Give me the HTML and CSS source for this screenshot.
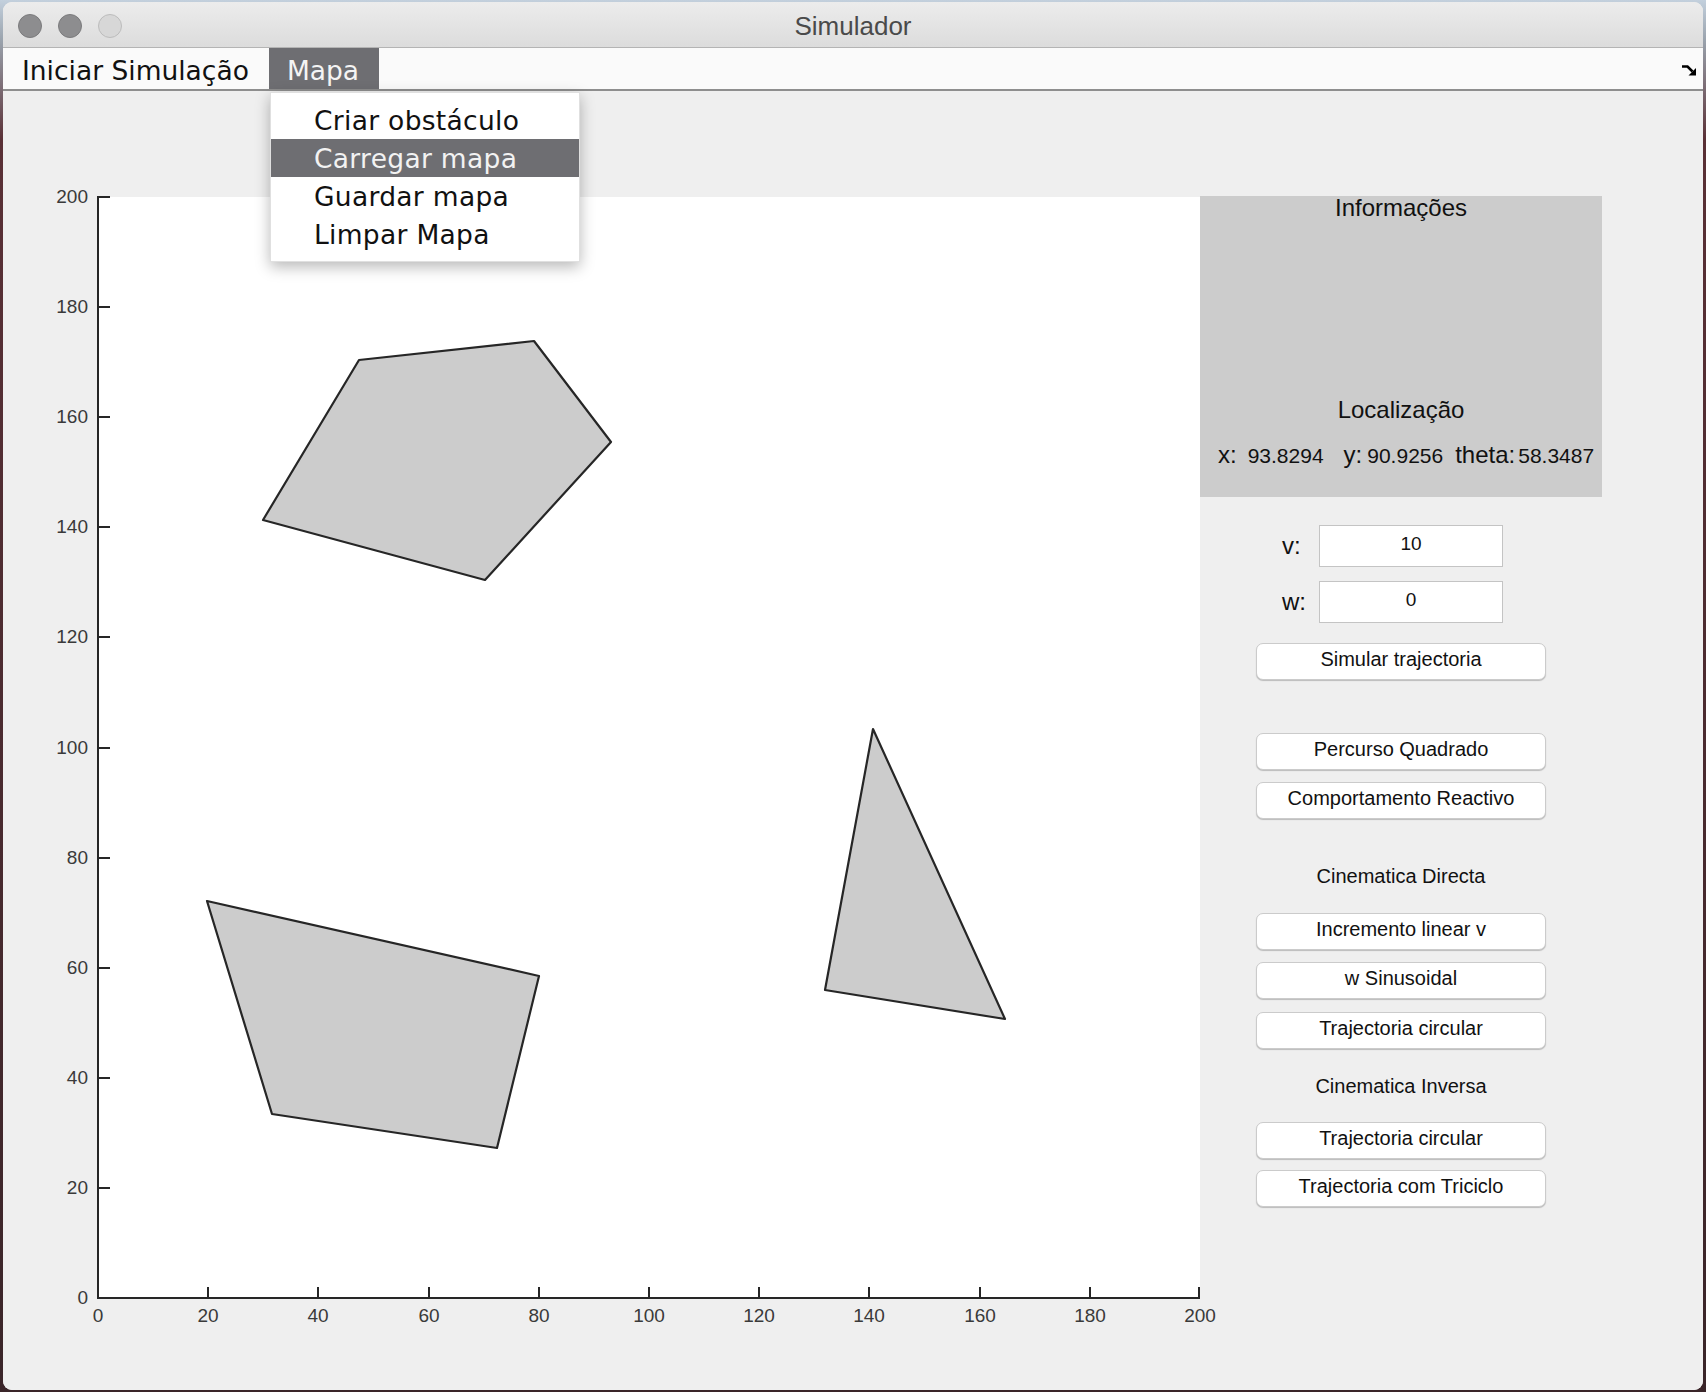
FILE: index.html
```html
<!DOCTYPE html>
<html lang="pt">
<head>
<meta charset="utf-8">
<title>Simulador</title>
<link rel="stylesheet" href="styles.css">
</head>
<body>
<div class="window">
  <header class="titlebar">
    <div class="lights">
      <span class="light dark"></span>
      <span class="light dark"></span>
      <span class="light off"></span>
    </div>
    <div class="title">Simulador</div>
    <div></div>
  </header>
  <nav class="menubar">
    <span class="menu-item">Iniciar Simulação</span>
    <span class="menu-item active">Mapa</span>
    <svg class="menu-arrow" width="16" height="13" viewBox="0 0 16 13">
      <path d="M1 3.5 H6.5 L11.5 8.5" fill="none" stroke="#000" stroke-width="2.6"/>
      <polygon points="7.5,12.5 15,12.5 15,5" fill="#000"/>
    </svg>
  </nav>
  <ul class="dropdown">
    <li class="dd-item">Criar obstáculo</li>
    <li class="dd-item selected">Carregar mapa</li>
    <li class="dd-item">Guardar mapa</li>
    <li class="dd-item">Limpar Mapa</li>
  </ul>
  <main class="content">
    <svg class="plot" width="1197" height="1299" viewBox="3 91 1197 1299">
      <rect x="98" y="197" width="1102" height="1101" fill="#ffffff"/>
      <g class="obstacles">
        <polygon points="359,360 534,341 611,442 485,580 263,520"/>
        <polygon points="873,729 1005,1019 825,990"/>
        <polygon points="207,901 539,976 497,1148 272,1114"/>
      </g>
      <g class="ticks">
        <line x1="98" y1="197" x2="110" y2="197"/>
        <line x1="98" y1="307" x2="110" y2="307"/>
        <line x1="98" y1="417" x2="110" y2="417"/>
        <line x1="98" y1="527" x2="110" y2="527"/>
        <line x1="98" y1="637" x2="110" y2="637"/>
        <line x1="98" y1="748" x2="110" y2="748"/>
        <line x1="98" y1="858" x2="110" y2="858"/>
        <line x1="98" y1="968" x2="110" y2="968"/>
        <line x1="98" y1="1078" x2="110" y2="1078"/>
        <line x1="98" y1="1188" x2="110" y2="1188"/>
        <line x1="208" y1="1298" x2="208" y2="1287"/>
        <line x1="318" y1="1298" x2="318" y2="1287"/>
        <line x1="429" y1="1298" x2="429" y2="1287"/>
        <line x1="539" y1="1298" x2="539" y2="1287"/>
        <line x1="649" y1="1298" x2="649" y2="1287"/>
        <line x1="759" y1="1298" x2="759" y2="1287"/>
        <line x1="869" y1="1298" x2="869" y2="1287"/>
        <line x1="980" y1="1298" x2="980" y2="1287"/>
        <line x1="1090" y1="1298" x2="1090" y2="1287"/>
        <line x1="1199" y1="1298" x2="1199" y2="1287"/>
        <path d="M98 196 V1298 H1200"/>
      </g>
      <g class="ylabels">
        <text x="88" y="203">200</text>
        <text x="88" y="313">180</text>
        <text x="88" y="423">160</text>
        <text x="88" y="533">140</text>
        <text x="88" y="643">120</text>
        <text x="88" y="754">100</text>
        <text x="88" y="864">80</text>
        <text x="88" y="974">60</text>
        <text x="88" y="1084">40</text>
        <text x="88" y="1194">20</text>
        <text x="88" y="1304">0</text>
      </g>
      <g class="xlabels">
        <text x="98" y="1322">0</text>
        <text x="208" y="1322">20</text>
        <text x="318" y="1322">40</text>
        <text x="429" y="1322">60</text>
        <text x="539" y="1322">80</text>
        <text x="649" y="1322">100</text>
        <text x="759" y="1322">120</text>
        <text x="869" y="1322">140</text>
        <text x="980" y="1322">160</text>
        <text x="1090" y="1322">180</text>
        <text x="1200" y="1322">200</text>
      </g>
    </svg>
    <aside class="side">
      <section class="info">
        <div class="info-title">Informações</div>
        <div class="info-title loc-title">Localização</div>
        <div class="coords">
          <span class="lbl">x:</span><span class="val v-x">93.8294</span>
          <span class="lbl l-y">y:</span><span class="val v-y">90.9256</span>
          <span class="lbl l-t">theta:</span><span class="val v-t">58.3487</span>
        </div>
      </section>
      <div class="field-row first">
        <span class="field-label">v:</span>
        <div class="field">10</div>
      </div>
      <div class="field-row second">
        <span class="field-label">w:</span>
        <div class="field">0</div>
      </div>
      <button class="btn b-sim">Simular trajectoria</button>
      <button class="btn b-perc">Percurso Quadrado</button>
      <button class="btn b-next">Comportamento Reactivo</button>
      <div class="section-label s-dir">Cinematica Directa</div>
      <button class="btn b-after-label">Incremento linear v</button>
      <button class="btn b-next">w Sinusoidal</button>
      <button class="btn b-next13">Trajectoria circular</button>
      <div class="section-label s-inv">Cinematica Inversa</div>
      <button class="btn b-after-inv">Trajectoria circular</button>
      <button class="btn b-last">Trajectoria com Triciclo</button>
    </aside>
  </main>
</div>
</body>
</html>
```

FILE: styles.css
```css
html, body {
  margin: 0;
  padding: 0;
}

body {
  width: 1706px;
  height: 1392px;
  overflow: hidden;
  background: linear-gradient(to bottom, #c3d0dd 0, #9aa3ad 40px, #5a3036 140px, #3a2529 100%);
  font-family: "Liberation Sans", Arial, sans-serif;
  color: #141414;
}

.window {
  position: relative;
  width: 1700px;
  height: 1388px;
  margin: 2px 0 0 3px;
  border-radius: 9px;
  overflow: hidden;
  background: #efefef;
  display: flex;
  flex-direction: column;
}

/* Title bar */
.titlebar {
  height: 45px;
  flex: none;
  display: grid;
  grid-template-columns: 1fr auto 1fr;
  align-items: center;
  background: linear-gradient(to bottom, #ececec 0%, #dcdcdc 100%);
  border-bottom: 1px solid #b4b4b4;
}

.lights {
  display: flex;
  gap: 16px;
  padding-left: 15px;
}

.light {
  width: 24px;
  height: 24px;
  border-radius: 50%;
  box-sizing: border-box;
}

.light.dark {
  background: #8d8d8f;
  border: 1px solid #7b7b7d;
}

.light.off {
  background: #d7d7d7;
  border: 1px solid #bcbcbc;
}

.title {
  font-family: "Liberation Sans", Arial, sans-serif;
  font-size: 26px;
  line-height: 45px;
  padding-top: 2px;
  color: #4a4a4a;
}

/* Menu bar */
.menubar {
  height: 41px;
  flex: none;
  display: flex;
  align-items: stretch;
  background: #fafafa;
  border-bottom: 2px solid #8e8e8e;
  font-family: "DejaVu Sans", sans-serif;
  font-size: 26.5px;
}

.menu-item {
  padding: 4px 20px 0 20px;
  line-height: 37px;
  color: #111;
}

.menu-item:first-child {
  padding-left: 19px;
}

.menu-item.active {
  background: #6e6e72;
  color: #f4f4f4;
  padding-left: 18px;
}

.menu-arrow {
  margin-left: auto;
  margin-right: 6px;
  align-self: center;
  margin-top: 2px;
}

/* Dropdown */
.dropdown {
  position: absolute;
  left: 267px;
  top: 90px;
  width: 310px;
  margin: 0;
  padding: 8px 0;
  list-style: none;
  background: #ffffff;
  border: 1px solid rgba(0, 0, 0, 0.12);
  box-sizing: border-box;
  box-shadow: 0 5px 14px rgba(0, 0, 0, 0.28);
  font-family: "DejaVu Sans", sans-serif;
  font-size: 26.5px;
  letter-spacing: 0.3px;
  z-index: 5;
}

.dd-item {
  height: 38px;
  box-sizing: border-box;
  padding: 2px 0 0 43px;
  line-height: 36px;
  color: #111;
}

.dd-item.selected {
  background: #6e6e72;
  color: #f2f2f2;
}

/* Content */
.content {
  flex: 1;
  display: flex;
  align-items: flex-start;
  background: #efefef;
}

.plot {
  display: block;
  flex: none;
  overflow: visible;
}

.obstacles polygon {
  fill: #cccccc;
  stroke: #262626;
  stroke-width: 2.2;
  stroke-linejoin: round;
}

.ticks line,
.ticks path {
  stroke: #262626;
  stroke-width: 2;
  fill: none;
}

.ylabels text,
.xlabels text {
  font-family: "Liberation Sans", Arial, sans-serif;
  font-size: 19px;
  fill: #3a3a3a;
}

.ylabels text {
  text-anchor: end;
}

.xlabels text {
  text-anchor: middle;
}

/* Side panel */
.side {
  width: 402px;
  flex: none;
  margin-top: 105px;
  display: flex;
  flex-direction: column;
  align-items: center;
}

.info {
  width: 402px;
  height: 301px;
  background: #cccccc;
  box-sizing: border-box;
}

.info-title {
  text-align: center;
  font-size: 24px;
  line-height: 24px;
  color: #111;
}

.loc-title {
  margin-top: 178px;
}

.coords {
  margin-top: 21px;
  display: flex;
  align-items: baseline;
  padding-left: 18px;
  line-height: 24px;
  color: #111;
}

.lbl {
  font-size: 24px;
}

.val {
  font-size: 21px;
}

.v-x { margin-left: 11px; }
.l-y { margin-left: 20px; }
.v-y { margin-left: 5px; }
.l-t { margin-left: 12px; }
.v-t { margin-left: 3px; }

.field-row {
  width: 402px;
  box-sizing: border-box;
  padding-left: 82px;
  display: flex;
  align-items: center;
}

.field-row.first { margin-top: 28px; }
.field-row.second { margin-top: 14px; }

.field-label {
  width: 37px;
  font-size: 24px;
  color: #111;
}

.field {
  width: 184px;
  height: 42px;
  box-sizing: border-box;
  background: #ffffff;
  border: 1px solid #c4c4c4;
  text-align: center;
  font-size: 19px;
  line-height: 35px;
  padding-bottom: 5px;
  color: #111;
}

.btn {
  display: block;
  width: 290px;
  height: 37px;
  box-sizing: border-box;
  margin: 0;
  padding: 0 0 5px 0;
  background: #ffffff;
  border: 1px solid #cbcbcb;
  border-radius: 7px;
  box-shadow: 0 1px 1px rgba(0, 0, 0, 0.22);
  font-family: "Liberation Sans", Arial, sans-serif;
  font-size: 20px;
  line-height: 30px;
  color: #111;
  text-align: center;
}

.b-sim { margin-top: 20px; }
.b-perc { margin-top: 53px; }
.b-next { margin-top: 12px; }
.b-next13 { margin-top: 13px; }
.b-after-label { margin-top: 25px; }
.b-after-inv { margin-top: 24px; }
.b-last { margin-top: 11px; }

.section-label {
  font-size: 20px;
  line-height: 24px;
  color: #111;
  text-align: center;
}

.s-dir { margin-top: 45px; }
.s-inv { margin-top: 25px; }
```
